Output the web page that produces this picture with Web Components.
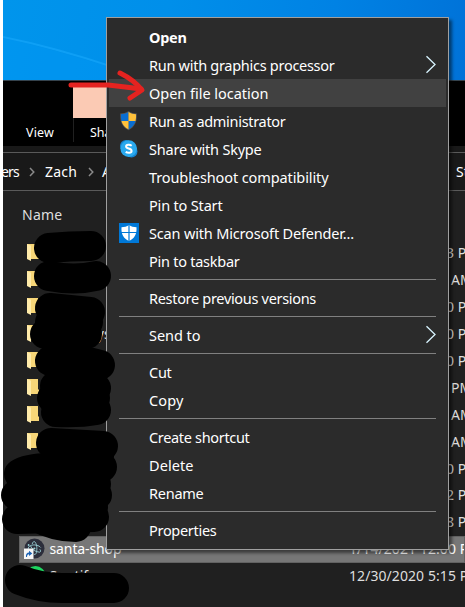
<!DOCTYPE html>
<html lang="en">
<head>
<meta charset="utf-8">
<title>Context menu</title>
<style>
body{margin:0;background:#fff;font-family:"Noto Sans","Open Sans",sans-serif;overflow:hidden}
</style>
</head>
<body>
<desktop-scene></desktop-scene>
<script>
const mount=(el,html)=>{el.attachShadow({mode:'open'}).innerHTML=html;};

/* One line of text whose tracking is adjusted to a given width. */
class FitText extends HTMLElement{
  connectedCallback(){
    mount(this,`<style>:host{display:inline-block;white-space:pre}span{display:inline-block}</style><span><slot></slot></span>`);
    const s=this.shadowRoot.querySelector('span'),w=+this.getAttribute('w');
    if(w){const n=this.textContent.length;s.style.letterSpacing=((w-s.getBoundingClientRect().width)/n)+'px';}
  }
}
customElements.define('fit-text',FitText);

class MenuItem extends HTMLElement{
  connectedCallback(){
    mount(this,`<style>
    :host{display:flex;align-items:center;height:28px;margin:0 2px;color:#fff;font-size:14.5px;line-height:28px}
    :host([active]){background:#414141}
    :host([bold]){font-weight:700}
    .icon{width:40px;height:28px;flex:none;display:flex;align-items:center;padding-left:10px;box-sizing:border-box}
    .label{flex:1;height:28px}
    svg.arrow{width:12px;height:20px;margin-right:9px}
    </style><div class="icon"><slot name="icon"></slot></div><div class="label"><fit-text w="${this.getAttribute('w')}">${this.getAttribute('label')}</fit-text></div>
    ${this.hasAttribute('sub')?'<svg class="arrow" viewBox="0 0 12 20"><path d="M1.5 1.2L10 9.5L1.5 17.8" fill="none" stroke="#d8f4ff" stroke-width="1.3"/></svg>':''}`);
  }
}
customElements.define('menu-item',MenuItem);

class MenuSeparator extends HTMLElement{
  connectedCallback(){mount(this,`<style>:host{display:block;height:9px;padding:4px 12px 0;box-sizing:border-box}div{height:1px;background:#808080}</style><div></div>`);}
}
customElements.define('menu-separator',MenuSeparator);

class ContextMenu extends HTMLElement{
  connectedCallback(){mount(this,`<style>
  :host{display:block;box-sizing:border-box;width:343px;height:533px;border:1px solid #a0a0a0;background:#2b2b2b;padding:5px 0;box-shadow:3px 3px 3px rgba(0,0,0,.5)}
  svg{display:block}
  </style>
  <menu-item bold label="Open" w="37.5"></menu-item>
  <menu-item label="Run with graphics processor" w="185.5" sub></menu-item>
  <menu-item active label="Open file location" w="119.5"></menu-item>
  <menu-item label="Run as administrator" w="136.5"><svg slot="icon" width="20" height="20" viewBox="0 0 20 20"><defs><clipPath id="s"><path d="M9.5 0C7 1.8 4 2.5 1.2 2.5C.7 10.5 3 16 9.5 19.3C16 16 18.3 10.5 17.8 2.5C15 2.5 12 1.8 9.5 0Z"/></clipPath></defs><g clip-path="url(#s)"><path fill="#555" d="M0 0h20v20H0z"/></g><g clip-path="url(#s)" transform="translate(.9 .9) scale(.905)"><path fill="#0a6ed1" d="M0 0h9.5v10H0zM9.5 10H20v10H9.5z"/><path fill="#ffc13b" d="M9.5 0H20v10H9.5zM0 10h9.5v10H0z"/></g></svg></menu-item>
  <menu-item label="Share with Skype" w="112.5"><svg slot="icon" width="20" height="20" viewBox="0 0 20 20"><circle cx="7" cy="7" r="6" fill="#1685d1"/><circle cx="12.5" cy="12.5" r="6" fill="#1685d1"/><circle cx="9.7" cy="9.6" r="8.3" fill="#2aa9ee"/><path d="M12.7 6.7C11 5.4 7.1 5.2 7.1 7.4C7.1 10.1 12.6 8.8 12.6 11.9C12.6 14.2 8.6 14.1 6.7 12.8" fill="none" stroke="#fff" stroke-width="2"/></svg></menu-item>
  <menu-item label="Troubleshoot compatibility" w="179.5"></menu-item>
  <menu-item label="Pin to Start" w="73.5"></menu-item>
  <menu-item label="Scan with Microsoft Defender..." w="205"><svg slot="icon" width="20" height="20" viewBox="0 0 20 20"><path fill="#0078d7" d="M0 0h20v20H0z"/><path fill="#fff" d="M10 2C8 3.6 5.2 4.2 2.5 4.2C2 11 4.6 15.6 10 18C15.4 15.6 18 11 17.5 4.2C14.8 4.2 12 3.6 10 2Z"/><path d="M10 2v16M2 9.5h16" stroke="#0078d7" stroke-width="1.2"/></svg></menu-item>
  <menu-item label="Pin to taskbar" w="90.5"></menu-item>
  <menu-separator></menu-separator>
  <menu-item label="Restore previous versions" w="167"></menu-item>
  <menu-separator></menu-separator>
  <menu-item label="Send to" w="51.5" sub></menu-item>
  <menu-separator></menu-separator>
  <menu-item label="Cut" w="22.5"></menu-item>
  <menu-item label="Copy" w="34.5"></menu-item>
  <menu-separator></menu-separator>
  <menu-item label="Create shortcut" w="100.5"></menu-item>
  <menu-item label="Delete" w="44.5"></menu-item>
  <menu-item label="Rename" w="54.5"></menu-item>
  <menu-separator></menu-separator>
  <menu-item label="Properties" w="67.5"></menu-item>`);}
}
customElements.define('context-menu',ContextMenu);

class FileRow extends HTMLElement{
  connectedCallback(){
    const k=this.getAttribute('kind'),name=this.getAttribute('name')||'',d=this.getAttribute('date')||'',w=this.getAttribute('w')||'';
    const icons={
      folder:'<svg width="14" height="20" viewBox="0 0 14 20"><path d="M1 2h11v10.5h1V17H1z" fill="#f7d678"/><path d="M1 2l4 1.7V19L1 17z" fill="#ffebaa"/></svg>',
      app:'<svg width="22" height="22" viewBox="0 0 22 22"><circle cx="11.5" cy="10.5" r="10" fill="#2c2e3b"/><g fill="none" stroke="#9bd3d9" stroke-width=".9"><path d="M9.2 6C9.8 3.8 11 3 12 4C13.5 5.5 14.5 10 13.4 14.5C13 16 12.2 17 11 16.2"/><path d="M5.3 11C4.8 8 9 6.2 13.5 7.2C15.5 7.6 17 8.6 17.7 9.5"/><path d="M7.5 7.8C9 11.8 12.5 14 16.8 14.2C18 13.7 17.6 12.2 16.8 11.3"/></g><circle cx="11.4" cy="10.4" r="1" fill="#9bd3d9"/><circle cx="5.6" cy="7" r=".9" fill="#9bd3d9"/><path d="M1 10.5h9.5v10.5H1z" fill="#f6f6f6"/><path d="M3 19C2.6 16 4 14.6 6 14.5V12.7L9.3 15.5L6 18V16.2C4.7 16.4 4 17.3 4 19z" fill="#1d64b5"/></svg>',
      music:'<svg width="22" height="22" viewBox="0 0 22 22"><circle cx="12.5" cy="11" r="10" fill="#1ed760"/></svg>'};
    const short=d.length<5;
    mount(this,`<style>
    :host{display:flex;height:26.9px;margin-left:16px;align-items:center;font-size:14px;line-height:26px;color:#dedede;white-space:nowrap;box-sizing:border-box}
    :host([selected]){background:#777;color:#fff;outline:1px solid #626262;outline-offset:-1px}
    .i{width:30.5px;height:22px;flex:none;padding-left:${k==='folder'?7:4}px;box-sizing:border-box}
    .n{width:${short?(d[0]==='A'||d[0]==='P'?401.5:396.5):299.5}px;flex:none}
    svg{display:block}
    </style><div class="i">${icons[k]||''}</div><div class="n"><fit-text w="${w}">${name}</fit-text></div><fit-text w="${this.getAttribute('dw')||''}">${d}</fit-text>`);
  }
}
customElements.define('file-row',FileRow);

class ExplorerWindow extends HTMLElement{
  connectedCallback(){
    const rows=['3 PM','AM','0 PM','0 PM','0 PM','PM','AM','AM','0 PM','2 PM','8 PM'];
    const crumb='<svg width="6" height="10" viewBox="0 0 6 10"><path d="M1 1l3.8 4L1 9" fill="none" stroke="#8a8a8a" stroke-width="1.5"/></svg>';
    mount(this,`<style>
    :host{display:flex;flex-direction:column;height:527px;background:#202020;color:#fff;overflow:hidden;box-sizing:border-box;border-top:1px solid #35434d}
    .top{height:37px;background:#000;flex:none;padding:3px 0 0 70px;box-sizing:border-box}
    .peach{height:34px;width:33px;background:#fbcab4}
    .tabs{height:28px;background:#000;flex:none;display:flex;font-size:12.5px;line-height:29px}
    .view{width:47px;padding-left:23px;border-right:1px solid #202020;height:24px}
    .show{padding-left:16px}
    .address{height:45px;flex:none;background:#191919;padding:6px 0 7px;box-sizing:border-box}
    .bar{height:39px;flex:none;box-sizing:border-box;border:solid #5a5a5a;border-width:1px 0;display:flex;align-items:center;font-size:14px;line-height:35px}
    .bar>*{flex:none}
    .head{height:49px;flex:none;padding-left:19px;font-size:14px;line-height:47px;color:#dedede;box-sizing:border-box}
    </style>
    <div class="top"><div class="peach"></div></div>
    <div class="tabs"><div class="view"><fit-text w="28">View</fit-text></div><div class="show"><fit-text w="33">Share</fit-text></div></div>
    <div class="address"><div class="bar"><span style="margin-left:-2px"></span><fit-text w="18">ers</fit-text><span style="width:10px"></span>${crumb}<span style="width:10px"></span><fit-text w="32">Zach</fit-text><span style="width:11px"></span>${crumb}<span style="width:8px"></span><span>A</span><span style="width:345px"></span><span>St</span></div></div>
    <div class="head"><fit-text w="40.5">Name</fit-text></div>
    ${rows.map((d,i)=>`<file-row kind="${i<8?'folder':''}" date="${d}" name="${i===3?'             ys':''}"></file-row>`).join('')}
    <file-row kind="app" selected name="santa-shop" w="72" date="1/14/2021 12:00 PM" dw="132"></file-row>
    <file-row kind="music" name="Spotify" w="46" date="12/30/2020 5:15 PM" dw="132"></file-row>`);
  }
}
customElements.define('explorer-window',ExplorerWindow);

class MarkerLayer extends HTMLElement{
  connectedCallback(){mount(this,`<style>:host{display:block;width:465px;height:607px;pointer-events:none}svg{display:block}</style>
  <svg width="465" height="607" viewBox="0 0 465 607" fill="none" stroke-linecap="round" stroke-linejoin="round">
  <g stroke="#000" stroke-width="30">
  <path d="M49 248Q70 246 91 246"/><path d="M49 276Q75 281 96 276"/><path d="M50 308L90 312"/><path d="M45 334H87"/>
  <path d="M50 361Q75 358 100 365"/><path d="M55 386L96 388"/><path d="M56 412Q80 413 96 410"/><path d="M51 443L103 446"/>
  <path d="M19 474Q28 468 50 468L102 467"/><path d="M16 495H97"/><path d="M17 519L94 517"/><path d="M35 516Q55 527 76 527"/>
  <path d="M20 580Q40 588 62 588H114"/><path d="M24 484H96M25 507H93M60 456H99M52 398H95M50 322H88"/></g>
  <g stroke="#e52320" stroke-width="5"><path d="M71 85H108Q126 87 141 89"/><path d="M120 73Q134 80 142 90L130 98"/></g>
  </svg>`);}
}
customElements.define('marker-layer',MarkerLayer);

class DesktopScene extends HTMLElement{
  connectedCallback(){mount(this,`<style>
  :host{display:block;position:relative;width:462px;height:607px;margin-left:3px;overflow:visible}
  .wall{height:80px;background:linear-gradient(100deg,#0095ec 0%,#008fea 35%,#0082e4 70%,#0072d8 100%)}
  .wall svg{display:block}
  context-menu{position:absolute;left:103px;top:17px}
  marker-layer{position:absolute;left:-3px;top:0}
  </style>
  <div class="wall"><svg width="462" height="80"><path d="M0 37Q50 47 110 67" stroke="#12a3f8" stroke-width="2" fill="none" opacity=".8"/><path d="M0 38Q50 49 110 68V80H0z" fill="#0098f5" opacity=".35"/></svg></div>
  <explorer-window></explorer-window><context-menu></context-menu><marker-layer></marker-layer>`);}
}
customElements.define('desktop-scene',DesktopScene);
</script>
</body>
</html>
